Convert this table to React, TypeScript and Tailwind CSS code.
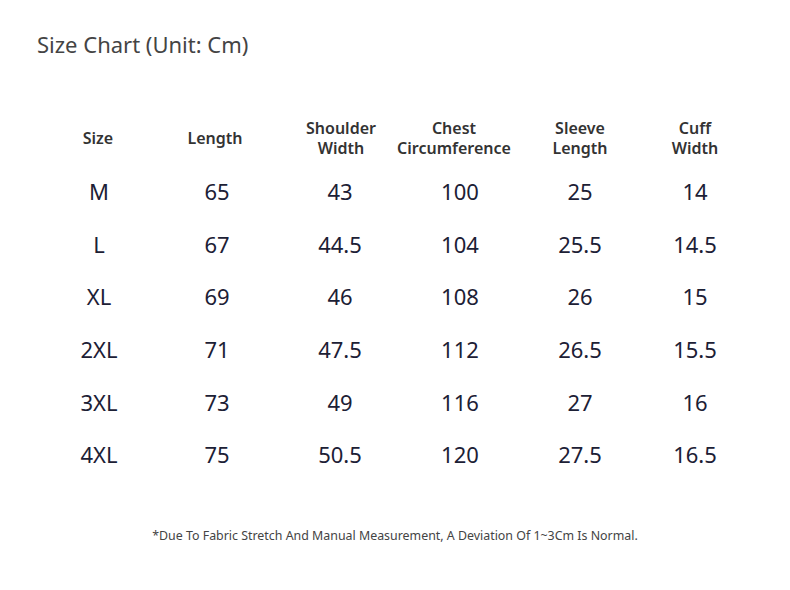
import React from "react";

const headers: string[][] = [
  ["Size"],
  ["Length"],
  ["Shoulder", "Width"],
  ["Chest", "Circumference"],
  ["Sleeve", "Length"],
  ["Cuff", "Width"],
];

const rows: string[][] = [
  ["M", "65", "43", "100", "25", "14"],
  ["L", "67", "44.5", "104", "25.5", "14.5"],
  ["XL", "69", "46", "108", "26", "15"],
  ["2XL", "71", "47.5", "112", "26.5", "15.5"],
  ["3XL", "73", "49", "116", "27", "16"],
  ["4XL", "75", "50.5", "120", "27.5", "16.5"],
];

const colW = ["w-[120px]", "w-[116px]", "w-[130px]", "w-[110px]", "w-[130px]", "w-[100px]"];
const headPad = ["pr-[2px]", "pr-[4px]", "pl-[2px]", "pr-[12px]", "", ""];

export default function App() {
  return (
    <div
      className="w-[790px] h-[590px] bg-white overflow-hidden"
      style={{ fontFamily: '"Noto Sans", "Open Sans", sans-serif' }}
    >
      <div className="pl-[37px] pt-[28px] text-[22px] leading-[32px] text-[#444444]">
        Size Chart (Unit: Cm)
      </div>
      <div className="mt-[58px] ml-[39px]">
        <div className="flex h-[40px] items-center">
          {headers.map((h, i) => (
            <div
              key={i}
              className={`${colW[i]} ${headPad[i]} shrink-0 flex flex-col items-center text-[16px] leading-[20px] font-semibold text-[#333333]`}
            >
              {h.map((l, j) => (
                <span key={j}>{l}</span>
              ))}
            </div>
          ))}
        </div>
        <div className="mt-[7px]">
          {rows.map((r, i) => (
            <div key={i} className="flex h-[52.6px] items-center">
              {r.map((c, j) => (
                <div
                  key={j}
                  className={`${colW[j]} shrink-0 text-center text-[22px] leading-[30px] text-[#1c2035]`}
                >
                  {c}
                </div>
              ))}
            </div>
          ))}
        </div>
      </div>
      <div className="mt-[46px] text-center text-[12.4px] leading-[18px] text-[#444444]">
        *Due To Fabric Stretch And Manual Measurement, A Deviation Of 1~3Cm Is Normal.
      </div>
    </div>
  );
}
